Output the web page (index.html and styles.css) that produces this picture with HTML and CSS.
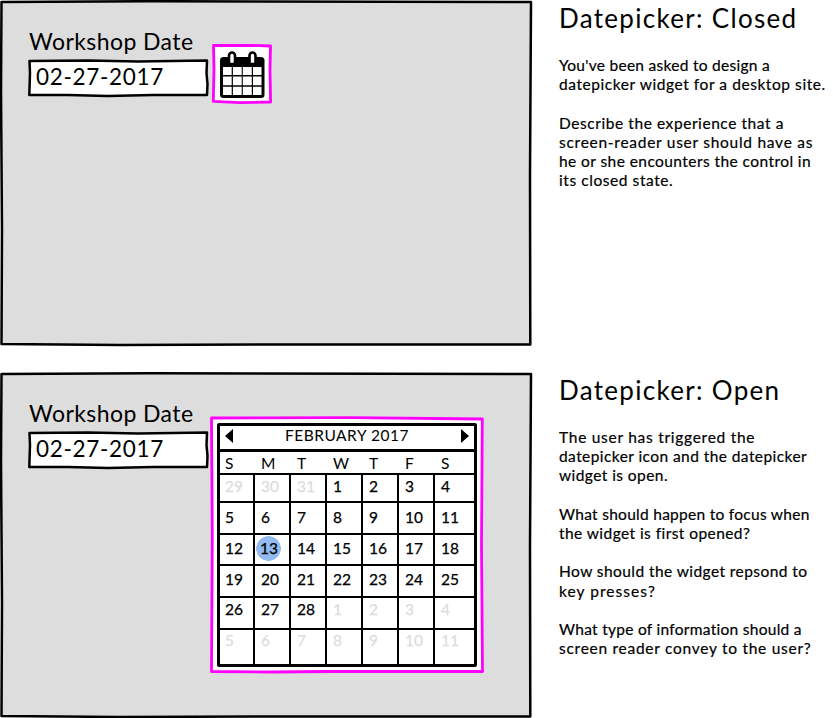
FILE: index.html
```html
<!DOCTYPE html>
<html lang="en">
<head>
<meta charset="utf-8">
<title>Datepicker</title>
<link rel="stylesheet" href="styles.css">
</head>
<body>
<main class="page">
  <section class="state">
    <div class="panel">
      <svg class="sketch" viewBox="0 0 532 346" preserveAspectRatio="none"><path class="frame" d="M1.5 2 L150 1.2 L531 2 L530 175 L530.3 344.5 L260 344.5 L120 345 L1.5 344 L2 230 L1 90 Z"/></svg>
      <div class="field">
        <label class="label">Workshop Date</label>
        <div class="input">
          <svg class="sketch" viewBox="0 0 181 38"><path class="box" d="M1.5 2 L60 1.6 L110 2.4 L179 1.6 L178.5 14 L179.5 25 L179 36 L125 36 L80 37 L40 36 L1.3 36 L2 14 Z"/></svg>
          <span class="value">02-27-2017</span>
        </div>
      </div>
      <div class="trigger">
        <svg class="sketch" viewBox="0 0 60 60"><path class="focus" d="M1.5 1.5 L40 1.4 L58.5 2 L58 26 L58.6 58 L28 58.6 L1.3 57.4 L2 25 Z"/></svg>
        <svg class="icon" viewBox="0 0 45 48">
          <rect x="0" y="7" width="44.5" height="41" rx="3.5"/>
          <path class="ring" d="M9 14 V5.5 a3 3 0 0 1 6 0 V14 Z M29.5 14 V5.5 a3 3 0 0 1 6 0 V14 Z"/>
          <path class="hole" d="M3 17h8.7v8H3z M12.9 17h8.8v8h-8.8z M22.8 17h9v8h-9z M33 17h8.5v8H33z M3 26.5h8.7v8.8H3z M12.9 26.5h8.8v8.8h-8.8z M22.8 26.5h9v8.8h-9z M33 26.5h8.5v8.8H33z M3 36.7h8.7v8.3H3z M12.9 36.7h8.8v8.3h-8.8z M22.8 36.7h9v8.3h-9z M33 36.7h8.5v8.3H33z"/>
        </svg>
      </div>
    </div>
    <div class="notes">
      <h1>Datepicker: Closed</h1>
      <p><span class="tight">You've been asked to design a</span><br><span class="wide">datepicker widget for a desktop site.</span></p>
      <p><span class="wide">Describe the experience that a</span><br><span class="wider">screen-reader user should have as</span><br>he or she encounters the control in<br><span class="wide">its closed state.</span></p>
    </div>
  </section>
  <section class="state">
    <div class="panel">
      <svg class="sketch" viewBox="0 0 532 346" preserveAspectRatio="none"><path class="frame" d="M1.5 2 L150 1.2 L531 2 L530 175 L530.3 344.5 L260 344.5 L120 345 L1.5 344 L2 230 L1 90 Z"/></svg>
      <div class="field">
        <label class="label">Workshop Date</label>
        <div class="input">
          <svg class="sketch" viewBox="0 0 181 38"><path class="box" d="M1.5 2 L60 1.6 L110 2.4 L179 1.6 L178.5 14 L179.5 25 L179 36 L125 36 L80 37 L40 36 L1.3 36 L2 14 Z"/></svg>
          <span class="value">02-27-2017</span>
        </div>
      </div>
      <div class="popup">
        <svg class="sketch" viewBox="0 0 274 258"><path class="focus" d="M1.5 2 L140 1.7 L272.3 3 L271.5 130 L272.5 255.5 L120 255.5 L60 256 L1.5 255.5 L2.3 120 Z"/></svg>
        <div class="calendar">
          <div class="month">
            <svg class="arrow" viewBox="0 0 8 14"><path d="M8 0 V14 L0 7 Z"/></svg>
            <span>FEBRUARY 2017</span>
            <svg class="arrow" viewBox="0 0 8 14"><path d="M0 0 V14 L8 7 Z"/></svg>
          </div>
          <div class="row weekdays"><span>S</span><span>M</span><span>T</span><span>W</span><span>T</span><span>F</span><span>S</span></div>
          <div class="row w1"><span class="out">29</span><span class="out">30</span><span class="out">31</span><span>1</span><span>2</span><span>3</span><span>4</span></div>
          <div class="row w2"><span>5</span><span>6</span><span>7</span><span>8</span><span>9</span><span>10</span><span>11</span></div>
          <div class="row w3"><span>12</span><span class="today">13</span><span>14</span><span>15</span><span>16</span><span>17</span><span>18</span></div>
          <div class="row w4"><span>19</span><span>20</span><span>21</span><span>22</span><span>23</span><span>24</span><span>25</span></div>
          <div class="row w5"><span>26</span><span>27</span><span>28</span><span class="out">1</span><span class="out">2</span><span class="out">3</span><span class="out">4</span></div>
          <div class="row w6"><span class="out">5</span><span class="out">6</span><span class="out">7</span><span class="out">8</span><span class="out">9</span><span class="out">10</span><span class="out">11</span></div>
        </div>
      </div>
    </div>
    <div class="notes">
      <h1>Datepicker: Open</h1>
      <p><span class="wider">The user has triggered the</span><br>datepicker icon and the datepicker<br>widget is open.</p>
      <p><span class="tight">What should happen to focus when</span><br>the widget is first opened?</p>
      <p>How should the widget repsond to<br><span class="widest">key presses?</span></p>
      <p><span class="tight">What type of information should a</span><br><span class="wider">screen reader convey to the user?</span></p>
    </div>
  </section>
</main>
</body>
</html>
```
FILE: styles.css
```css
* { box-sizing: border-box; }
body {
  margin: 0;
  background: #fff;
  color: #000;
  font-family: Lato, "Open Sans", sans-serif;
  overflow: hidden;
}
.page { display: flex; flex-direction: column; gap: 26px; }
.state { display: flex; height: 346px; }
.panel {
  position: relative;
  flex: 0 0 532px;
  display: flex;
  align-items: flex-start;
}
.sketch {
  position: absolute;
  inset: 0;
  width: 100%;
  height: 100%;
  overflow: visible;
}
.sketch path { stroke: #000; stroke-width: 2.5; stroke-linejoin: round; }
.frame { fill: #ddd; }
.box { fill: #fff; }
.sketch .focus { fill: #fff; stroke: #f0f; stroke-width: 2.8; }
.field { margin: 28px 0 0 28px; width: 181px; position: relative; }
.label {
  display: block;
  height: 31px;
  line-height: 27px;
  font-size: 23px;
  letter-spacing: .42px;
  padding-left: 1px;
  white-space: nowrap;
}
.input { position: relative; height: 38px; }
.value {
  position: relative;
  display: block;
  padding-left: 8px;
  line-height: 36px;
  font-size: 22.5px;
  letter-spacing: .7px;
}
.trigger { position: relative; width: 60px; height: 60px; margin: 44px 0 0 3px; padding: 6px 0 0 8px; }
.icon { position: relative; display: block; width: 45px; height: 48px; }
.ring { fill: #fff; stroke: #000; stroke-width: 2.6; }
.hole { fill: #fff; }
.notes { padding-left: 27px; white-space: nowrap; }
h1 {
  margin: 3px 0 21px;
  font-size: 26px;
  font-weight: 400;
  line-height: 31px;
  padding-bottom: 1px;
  letter-spacing: 1.3px;
}
p {
  margin: 0 0 19.2px;
  font-size: 15.5px;
  line-height: 19.2px;
  letter-spacing: .43px;
  -webkit-text-stroke: .2px;
}
.tight { letter-spacing: .28px; }
.wide { letter-spacing: .57px; }
.wider { letter-spacing: .73px; }
.widest { letter-spacing: 1.05px; }
.popup { position: relative; width: 274px; height: 258px; margin: 44px 0 0 1px; padding: 7px; }
.calendar {
  position: relative;
  width: 260px;
  height: 244px;
  border: 3px solid #000;
  border-radius: 2px;
  background: #fff;
  font-size: 15.5px;
  line-height: 20px;
  -webkit-text-stroke: .25px;
}
.month {
  display: flex;
  justify-content: space-between;
  height: 26px;
  padding: 0 5px;
  border-bottom: 3px solid #000;
  line-height: 18px;
  letter-spacing: .5px;
  -webkit-text-stroke: 0;
}
.arrow { width: 8px; height: 14px; margin-top: 3px; }
.row { display: grid; grid-template-columns: 35px repeat(5, 36px) 39px; border-bottom: 2px solid #000; }
.row span { padding-left: 6px; border-right: 2px solid #000; }
.row span:first-child { padding-left: 5px; }
.row span:last-child { border-right: 0; }
.row.weekdays { height: 23px; -webkit-text-stroke: 0; }
.weekdays span { border-right: 0; padding-top: 1px; }
.w1 { height: 28px; }
.w2 { height: 32px; }
.w3 { height: 31px; }
.w4, .w5 { height: 32px; }
.row.w6 { height: 34px; border-bottom: 0; }
.w1 span { padding-top: 1px; }
.w2 span { padding-top: 4px; }
.w3 span, .w4 span { padding-top: 3px; }
.w5 span { padding-top: 1px; }
.row .out { color: #ddd; border-color: #000; }
.row .today {
  padding-left: 5px;
  background: radial-gradient(circle at 13.5px 13.5px, #94baf2 12px, transparent 12.6px);
}
```
